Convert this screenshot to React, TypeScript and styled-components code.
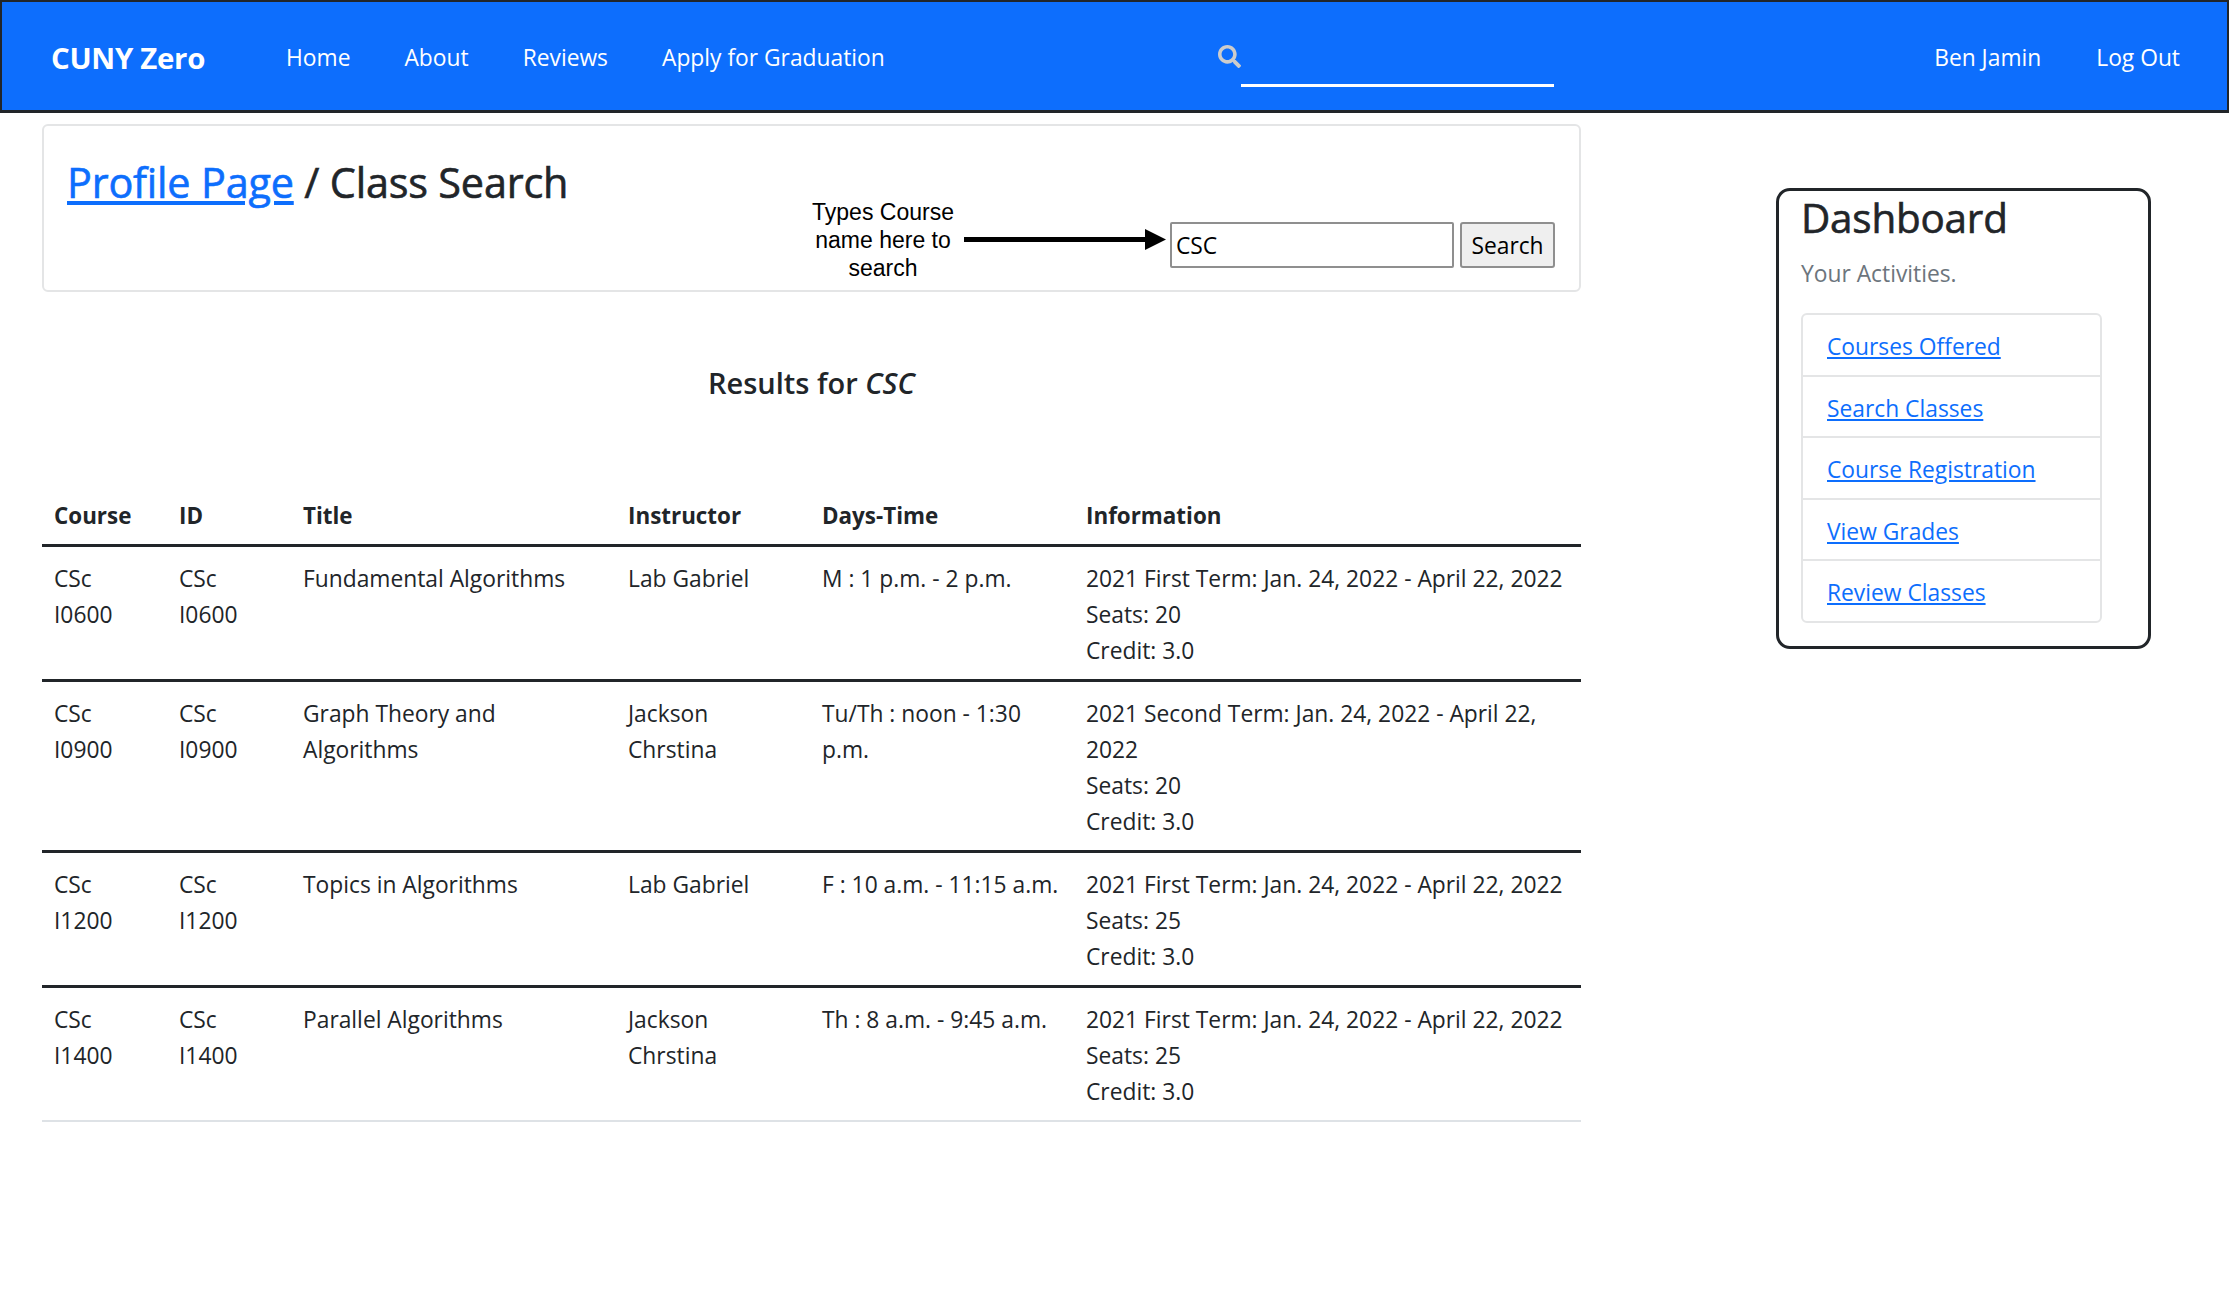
import React from "react";
import styled, { createGlobalStyle } from "styled-components";
import { FaSearch } from "react-icons/fa";

const Global = createGlobalStyle`
  html, body { margin: 0; padding: 0; background: #fff; }
  body {
    font-family: "Open Sans", "Noto Sans", sans-serif;
    font-size: 22.8px;
    line-height: 36px;
    color: #212529;
  }
  * { box-sizing: border-box; }
`;

const Navbar = styled.nav`
  height: 113px;
  background: #0d6efd;
  border: 2px solid #212529;
  border-bottom-width: 3px;
  display: flex;
  align-items: center;
  padding: 3px 47px 0 49px;
  color: #fff;
`;
const Brand = styled.a`
  font-size: 29.4px;
  font-weight: 700;
  letter-spacing: -0.3px;
  width: 235px;
`;
const NavLinks = styled.div`
  display: flex;
  gap: 54px;
  width: 932px;
`;
const NavLink = styled.a`
  color: #fff;
`;
const NavSearch = styled.div`
  display: flex;
  align-items: flex-start;
  width: 336px;
  height: 46px;
`;
const SearchIcon = styled(FaSearch)`
  color: #ccc;
  width: 23px;
  height: 23px;
  flex: none;
  margin-top: 10px;
`;
const NavInput = styled.input`
  width: 313px;
  height: 40px;
  margin-top: 12px;
  background: transparent;
  border: 0;
  border-bottom: 3px solid #fff;
  outline: none;
`;
const NavRight = styled.div`
  margin-left: auto;
  display: flex;
  gap: 55px;
`;

const Layout = styled.div`
  display: flex;
  align-items: flex-start;
`;
const Content = styled.main`
  width: 1539px;
  margin: 11px 0 0 42px;
`;
const Card = styled.section`
  height: 168px;
  border: 2px solid #e4e5e6;
  border-radius: 6px;
  padding: 29px 24px 22px 23px;
  display: flex;
  justify-content: space-between;
`;
const Title = styled.h2`
  margin: 0;
  font-size: 41.4px;
  font-weight: 400;
  line-height: 54px;
  letter-spacing: -0.2px;
  -webkit-text-stroke: 0.6px currentColor;
`;
const TitleLink = styled.a`
  color: #0d6efd;
  text-decoration: underline;
`;
const SearchGroup = styled.form`
  display: flex;
  align-items: flex-end;
`;
const Note = styled.div`
  width: 150px;
  margin: 0 8px -14px 0;
  font-family: "Liberation Sans", Arial, sans-serif;
  font-size: 23px;
  line-height: 28px;
  text-align: center;
  color: #000;
`;
const Arrow = styled.svg`
  width: 207px;
  height: 24px;
  margin: 0 0 16px -6px;
  flex: none;
`;
const TextInput = styled.input`
  width: 284px;
  height: 46px;
  margin-left: 3px;
  border: 2px solid #8f8f8f;
  border-radius: 2px;
  padding: 2px 4px;
  font: inherit;
  color: #000;
`;
const Button = styled.button`
  width: 95px;
  height: 46px;
  margin-left: 6px;
  border: 2px solid #8f8f8f;
  border-radius: 3px;
  background: #efefef;
  padding: 2px 0 0;
  font: inherit;
  color: #000;
`;
const Results = styled.h5`
  margin: 71px 0 81px;
  height: 40px;
  font-size: 29px;
  font-weight: 600;
  line-height: 40px;
  text-align: center;
`;
const Table = styled.table`
  width: 100%;
  table-layout: fixed;
  border-collapse: collapse;
`;
const Col = styled.col<{ $w: number }>`
  width: ${(p) => p.$w}px;
`;
const Th = styled.th`
  padding: 14px 12px 10px;
  text-align: left;
  font-size: 22.4px;
  font-weight: 700;
  border-bottom: 3px solid #212529;
`;
const Tr = styled.tr`
  border-bottom: 3px solid #212529;
  &:last-child { border-bottom: 2px solid #dee2e6; }
`;
const Td = styled.td`
  padding: 14px 12px 10px;
  vertical-align: top;
`;
const Line = styled.div``;

const Side = styled.aside`
  width: 375px;
  height: 461px;
  margin: 75px 0 0 195px;
  border: 3px solid #212529;
  border-radius: 14px;
  padding: 0 22px;
`;
const SideTitle = styled.h2`
  margin: 0;
  font-size: 40.4px;
  font-weight: 400;
  line-height: 54px;
  letter-spacing: -0.2px;
  -webkit-text-stroke: 0.6px currentColor;
`;
const SideSub = styled.p`
  margin: 0;
  padding-top: 11px;
  height: 68px;
  color: #6c757d;
`;
const List = styled.ul`
  list-style: none;
  margin: 0;
  padding: 0;
  width: 301px;
  border: 2px solid #e4e5e6;
  border-radius: 6px;
`;
const Item = styled.li`
  height: 61.6px;
  padding: 14px 24px 0;
  border-bottom: 2px solid #e4e5e6;
  &:last-child { border-bottom: 0; height: 60px; }
`;
const ItemLink = styled.a`
  color: #0d6efd;
  text-decoration: underline;
`;

const rows = [
  ["I0600", "Fundamental Algorithms", "Lab Gabriel", "M : 1 p.m. - 2 p.m.", "2021 First Term: Jan. 24, 2022 - April 22, 2022", "20"],
  ["I0900", "Graph Theory and Algorithms", "Jackson Chrstina", "Tu/Th : noon - 1:30 p.m.", "2021 Second Term: Jan. 24, 2022 - April 22, 2022", "20"],
  ["I1200", "Topics in Algorithms", "Lab Gabriel", "F : 10 a.m. - 11:15 a.m.", "2021 First Term: Jan. 24, 2022 - April 22, 2022", "25"],
  ["I1400", "Parallel Algorithms", "Jackson Chrstina", "Th : 8 a.m. - 9:45 a.m.", "2021 First Term: Jan. 24, 2022 - April 22, 2022", "25"],
];
const widths = [125, 124, 325, 194, 264, 507];
const heads = ["Course", "ID", "Title", "Instructor", "Days-Time", "Information"];
const activities = ["Courses Offered", "Search Classes", "Course Registration", "View Grades", "Review Classes"];

export default function App() {
  return (
    <>
      <Global />
      <Navbar>
        <Brand>CUNY Zero</Brand>
        <NavLinks>
          <NavLink>Home</NavLink>
          <NavLink>About</NavLink>
          <NavLink>Reviews</NavLink>
          <NavLink>Apply for Graduation</NavLink>
        </NavLinks>
        <NavSearch>
          <SearchIcon />
          <NavInput />
        </NavSearch>
        <NavRight>
          <NavLink>Ben Jamin</NavLink>
          <NavLink>Log Out</NavLink>
        </NavRight>
      </Navbar>
      <Layout>
        <Content>
          <Card>
            <Title>
              <TitleLink>Profile Page</TitleLink> / Class Search
            </Title>
            <SearchGroup>
              <Note>Types Course name here to search</Note>
              <Arrow viewBox="0 0 207 24">
                <rect x="4" y="9" width="190" height="5" fill="#000" />
                <polygon points="185,1 206,11.5 185,22" fill="#000" />
              </Arrow>
              <TextInput defaultValue="CSC" />
              <Button type="button">Search</Button>
            </SearchGroup>
          </Card>
          <Results>
            Results for <em>CSC</em>
          </Results>
          <Table>
            <colgroup>
              {widths.map((w, i) => (
                <Col key={i} $w={w} />
              ))}
            </colgroup>
            <thead>
              <tr>
                {heads.map((h) => (
                  <Th key={h}>{h}</Th>
                ))}
              </tr>
            </thead>
            <tbody>
              {rows.map((r) => (
                <Tr key={r[0]}>
                  <Td>
                    <Line>CSc</Line>
                    <Line>{r[0]}</Line>
                  </Td>
                  <Td>
                    <Line>CSc</Line>
                    <Line>{r[0]}</Line>
                  </Td>
                  <Td>{r[1]}</Td>
                  <Td>{r[2]}</Td>
                  <Td>{r[3]}</Td>
                  <Td>
                    <Line>{r[4]}</Line>
                    <Line>Seats: {r[5]}</Line>
                    <Line>Credit: 3.0</Line>
                  </Td>
                </Tr>
              ))}
            </tbody>
          </Table>
        </Content>
        <Side>
          <SideTitle>Dashboard</SideTitle>
          <SideSub>Your Activities.</SideSub>
          <List>
            {activities.map((a) => (
              <Item key={a}>
                <ItemLink>{a}</ItemLink>
              </Item>
            ))}
          </List>
        </Side>
      </Layout>
    </>
  );
}
